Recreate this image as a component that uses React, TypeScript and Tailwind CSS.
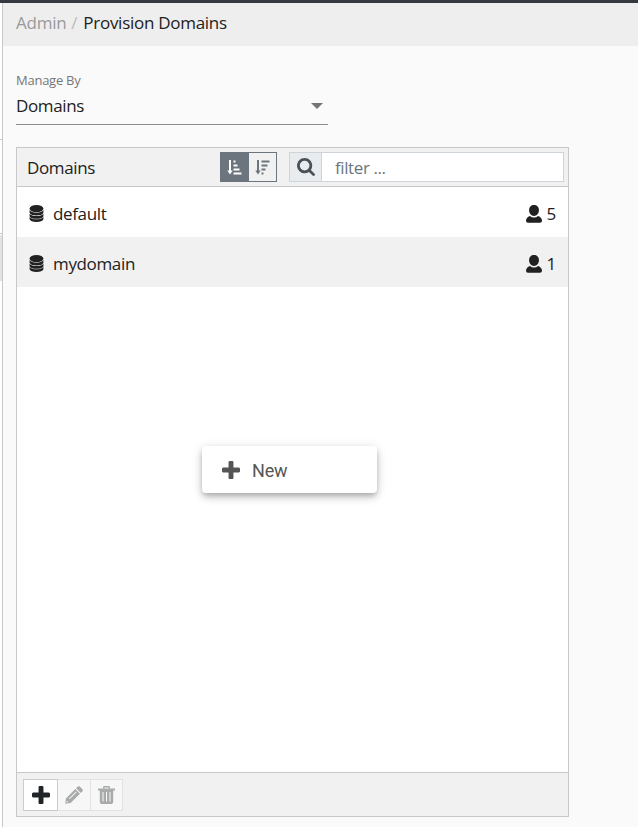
type IconProps = { className?: string }

const PlusIcon = ({ className }: IconProps) => (
  <svg viewBox="192 128 1408 1408" fill="currentColor" className={className}>
    <path d="M1600 736v192q0 40-28 68t-68 28h-416v416q0 40-28 68t-68 28h-192q-40 0-68-28t-28-68v-416h-416q-40 0-68-28t-28-68v-192q0-40 28-68t68-28h416v-416q0-40 28-68t68-28h192q40 0 68 28t28 68v416h416q40 0 68 28t28 68z" />
  </svg>
)

const SearchIcon = ({ className }: IconProps) => (
  <svg viewBox="64 128 1664 1664" fill="currentColor" className={className}>
    <path d="M1216 832q0-185-131.5-316.5t-316.5-131.5-316.5 131.5-131.5 316.5 131.5 316.5 316.5 131.5 316.5-131.5 131.5-316.5zm512 832q0 52-38 90t-90 38q-54 0-90-38l-343-342q-179 124-399 124-143 0-273.5-55.5t-225-150-150-225-55.5-273.5 55.5-273.5 150-225 225-150 273.5-55.5 273.5 55.5 225 150 150 225 55.5 273.5q0 220-124 399l343 343q37 37 37 90z" />
  </svg>
)

const PencilIcon = ({ className }: IconProps) => (
  <svg viewBox="0 0 18 18" fill="currentColor" className={className}>
    <path
      fillRule="evenodd"
      d="M.3 17.7l.6-5.2L10.3 3l4.700 4.700-9.400 9.400zM1.800 14.700l-.2 1.700 1.700-.2zM4 12.600l7-7 .6.600-7 7z"
    />
    <path d="M11.100 2.200L12.800.6q1-.9 2 0l2.600 2.600q.9 1 0 2L15.800 6.900z" />
  </svg>
)

const TrashIcon = ({ className }: IconProps) => (
  <svg viewBox="0 0 17 18" fill="currentColor" className={className}>
    <path d="M5 2.500V1.300Q5 0 6.300 0h4.400Q12 0 12 1.300v1.200h-1.500v-1h-4v1z" />
    <path d="M0 2.500h17v2H0z" />
    <path
      fillRule="evenodd"
      d="M1.800 4h13.400v12q0 2-2 2H3.800q-2 0-2-2zM4.500 6v9.500h1V6zM8 6v9.500h1V6zM11.500 6v9.500h1V6z"
    />
  </svg>
)

const DatabaseIcon = ({ className }: IconProps) => (
  <svg viewBox="0 0 14 17" fill="currentColor" className={className}>
    <ellipse cx="7" cy="3.600" rx="6.900" ry="3.600" />
    <path d="M.1 5.100q1.800 2.600 6.900 2.600t6.900-2.600v3q-1.400 2.500-6.900 2.500T.1 8.100z" />
    <path d="M.1 8.800q1.800 2.300 6.900 2.300t6.900-2.300v2.600q-1.400 2.400-6.900 2.400T.1 11.400z" />
    <path d="M.1 12q1.800 2.300 6.900 2.300t6.900-2.300v2.300Q12.700 17 7 17T.1 14.300z" />
  </svg>
)

const UserIcon = ({ className }: IconProps) => (
  <svg viewBox="0 0 16 18" fill="currentColor" className={className}>
    <path d="M8 .1c2.900 0 4.900 2 4.900 5.100 0 3.100-2.200 5.700-4.900 5.700S3.100 8.300 3.100 5.200C3.100 2.100 5.100.1 8 .1z" />
    <path d="M4 10.900q1.500 1.500 4 1.500t4-1.500q4 1.400 4 4.800 0 2-2 2H2q-2 0-2-2 0-3.400 4-4.800z" />
  </svg>
)

const SortIcon = ({ descending, className }: IconProps & { descending?: boolean }) => {
  const bars = descending ? [8, 6, 4, 2] : [2, 4, 6, 8]
  return (
    <svg viewBox="0 0 15 15" fill="none" stroke="currentColor" className={className}>
      <path d="M3 0v13" strokeWidth="2" />
      <path d="M.3 10.500h5.400L3 14.500z" fill="currentColor" stroke="none" />
      {bars.map((width, i) => (
        <path key={i} d={`M6.500 ${1.5 + i * 4}h${width}`} strokeWidth="2" />
      ))}
    </svg>
  )
}

const domains = [
  { name: "default", users: 5 },
  { name: "mydomain", users: 1 },
]

const Sidebar = () => (
  <div className="w-[3px] shrink-0 border-r border-[#c8c8c8] bg-white">
    <div className="h-[137px] border-b border-[#c8c8c8]"></div>
    <div className="h-[94px] border-b border-[#c8c8c8]"></div>
    <div className="mt-px h-[46px] bg-[#e2e2e2]"></div>
  </div>
)

const DomainList = () => (
  <div className="relative mt-[22px] flex h-[670px] w-[553px] flex-col border border-[#c8c8c8] bg-white">
    <div className="flex h-[39px] shrink-0 items-center border-b border-[#c8c8c8] bg-[#f1f1f1] pl-[10px] pr-1">
      <span className="w-[193px] pt-px tracking-[-0.35px]">Domains</span>
      <div className="flex h-[30px] w-[57px] border border-[#6c757d]">
        <button className="flex w-7 items-center justify-center bg-[#6c757d] pr-0.5 pt-px text-white">
          <SortIcon className="size-[15px]" />
        </button>
        <button className="flex flex-1 items-center justify-center pt-px text-[#6c757d]">
          <SortIcon descending className="size-[15px]" />
        </button>
      </div>
      <div className="ml-3 flex h-[30px] flex-1 border border-[#ced4da] bg-white">
        <div className="flex w-8 items-center justify-center border-r border-[#ced4da] bg-[#e9ecef] text-[#495057]">
          <SearchIcon className="size-[18px]" />
        </div>
        <input
          placeholder="filter ..."
          className="w-0 flex-1 px-[13px] pt-0.5 tracking-[-0.4px] outline-none placeholder:text-[#6c757d]"
        />
      </div>
    </div>
    <div className="flex-1">
      {domains.map((domain) => (
        <div key={domain.name} className="flex h-[50px] items-center pl-3 pr-[12px] pt-[3px] even:bg-[#f1f1f1]">
          <DatabaseIcon className="h-[17px] w-[15px]" />
          <span className="ml-[9px] flex-1 tracking-[-0.35px]">{domain.name}</span>
          <UserIcon className="h-[18px] w-4" />
          <span className="ml-[5px]">{domain.users}</span>
        </div>
      ))}
    </div>
    <div className="flex h-[44px] shrink-0 border-t border-[#c8c8c8] bg-[#f1f1f1] pl-[6px] pt-[6px]">
      <button className="flex h-8 w-[35px] items-center justify-center border border-[#ccc] bg-white text-[#212529]">
        <PlusIcon className="size-[18px]" />
      </button>
      <button className="flex h-8 w-[33px] items-center justify-center border-y border-r border-[#e2e2e2] bg-[#f7f7f7] pr-px text-[#a9aaab]">
        <PencilIcon className="size-[18px]" />
      </button>
      <button className="flex h-8 w-8 items-center justify-center border-y border-r border-[#e2e2e2] bg-[#f7f7f7] text-[#a9aaab]">
        <TrashIcon className="h-[18px] w-[17px]" />
      </button>
    </div>
    {/* Context menu */}
    <div className="absolute left-[185px] top-[298px] flex h-[47px] w-[175px] items-center rounded bg-white pl-5 pt-px font-['Roboto',sans-serif] text-[18px] tracking-[-0.2px] text-[#555] shadow-[0_3px_5px_-1px_rgba(0,0,0,0.2),0_5px_8px_0_rgba(0,0,0,0.14),0_1px_12px_0_rgba(0,0,0,0.1)]">
      <PlusIcon className="size-[18px]" />
      <span className="ml-3 pt-0.5">New</span>
    </div>
  </div>
)

export default function App() {
  return (
    <div className="flex h-[827px] w-[638px] flex-col overflow-hidden bg-[#fafafa] font-['Open_Sans',sans-serif] text-[17px] leading-6 tracking-[-0.25px] text-[#212121]">
      <div className="h-[3px] shrink-0 bg-[#343a40]"></div>
      <div className="flex flex-1">
        <Sidebar />
        <div className="flex-1">
          <div className="flex h-[43px] items-center bg-[#eee] pb-[3px] pl-[13px]">
            <span className="text-[#999]">Admin</span>
            <span className="ml-[5px] mr-[6px] text-[#bbb]">/</span>
            <span className="tracking-[-0.28px]">Provision Domains</span>
          </div>
          <div className="pl-[13px] pt-[25px]">
            <div className="h-[54px] w-[312px] border-b border-[#8c8c8c]">
              <div className="h-[18px] text-[13px] leading-[18px] text-[#777]">Manage By</div>
              <div className="mt-[5px] flex items-center justify-between pr-[5px]">
                <span className="tracking-[-0.35px]">Domains</span>
                <span className="border-x-[6px] border-t-[6px] border-x-transparent border-t-[#757575]"></span>
              </div>
            </div>
            <DomainList />
          </div>
        </div>
      </div>
    </div>
  )
}
